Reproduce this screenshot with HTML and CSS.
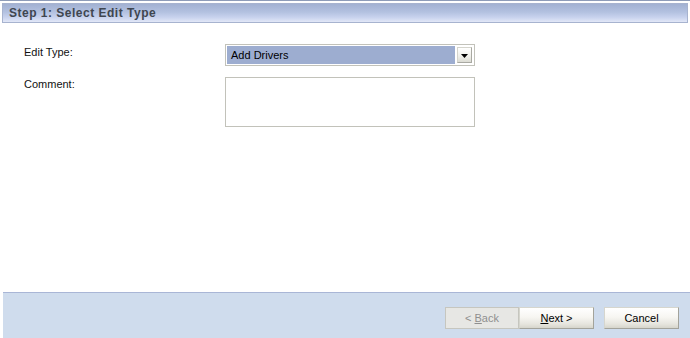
FILE: index.html
```html
<!DOCTYPE html>
<html>
<head>
<meta charset="utf-8">
<link rel="stylesheet" href="styles.css">
</head>
<body>
<div class="page">
  <div class="topline"></div>
  <div class="header"><span class="title">Step 1: Select Edit Type</span></div>
  <div class="form">
    <div class="label label-first">Edit Type:</div>
    <div class="select">
      <div class="select-value">Add Drivers</div>
      <div class="select-btn">
        <svg width="7" height="4" viewBox="0 0 7 4"><path d="M0 0H7L3.5 4Z" fill="#000"/></svg>
      </div>
    </div>
    <div class="label label-second">Comment:</div>
    <div class="textarea"></div>
  </div>
  <div class="footer">
    <div class="btn-pair">
      <button class="btn btn-disabled">&lt; <u>B</u>ack</button>
      <button class="btn"><u>N</u>ext &gt;</button>
    </div>
    <button class="btn">Cancel</button>
  </div>
</div>
</body>
</html>
```
FILE: styles.css
```css
html, body {
  margin: 0;
  padding: 0;
  background: #ffffff;
}
body {
  font-family: "Liberation Sans", Arial, sans-serif;
  font-size: 11px;
  color: #000000;
}
.page {
  width: 690px;
  height: 338px;
  display: flex;
  flex-direction: column;
  overflow: hidden;
}
.topline {
  height: 1px;
  background: #8e9cb8;
  margin-bottom: 2px;
}
.header {
  margin: 0 2px;
  height: 18px;
  border: 1px solid #a7b3cf;
  background: linear-gradient(to bottom, #a2b1d2 0%, #b3c1e0 45%, #c9d3ee 75%, #e2e7f7 100%);
  display: flex;
  align-items: center;
  padding-left: 6px;
}
.title {
  font-weight: bold;
  font-size: 12px;
  color: #3f4650;
  letter-spacing: 0.5px;
}
.form {
  display: grid;
  grid-template-columns: 201px 250px;
  grid-template-rows: 22px 50px;
  row-gap: 11px;
  padding: 21px 0 0 24px;
}
.label {
  line-height: 13px;
  color: #111111;
}
.label-first { padding-top: 2px; }
.label-second { padding-top: 1px; }
.select {
  box-sizing: border-box;
  height: 22px;
  border: 1px solid #c2c2ba;
  padding: 1px 2px 1px 1px;
  display: flex;
  align-items: center;
  gap: 2px;
}
.select-value {
  flex: 1;
  height: 18px;
  background: #9dadd0;
  line-height: 18px;
  padding-left: 4px;
  color: #000000;
}
.select-btn {
  box-sizing: border-box;
  width: 15px;
  height: 16px;
  border: 1px solid #a9a9a2;
  border-top-color: #d4d4cc;
  border-left-color: #d4d4cc;
  background: linear-gradient(to bottom, #ffffff 0%, #efefe9 60%, #dcdcd4 100%);
  display: flex;
  align-items: center;
  justify-content: center;
}
.select-btn svg { display: block; margin-top: 1px; }
.textarea {
  box-sizing: border-box;
  height: 50px;
  border: 1px solid #c2c2ba;
  background: #ffffff;
}
.footer {
  box-sizing: border-box;
  margin-top: auto;
  margin-left: 3px;
  height: 46px;
  border-top: 1px solid #a9b6d6;
  background: #cfdced;
  display: flex;
  justify-content: flex-end;
  align-items: flex-start;
  padding: 14px 11px 0 0;
  gap: 10px;
}
.btn-pair {
  display: flex;
  gap: 0;
}
.btn {
  box-sizing: border-box;
  width: 75px;
  height: 22px;
  margin: 0;
  padding: 0;
  font-family: "Liberation Sans", Arial, sans-serif;
  font-size: 11px;
  color: #000000;
  border: 1px solid #a3a39b;
  border-top-color: #d6d6ce;
  border-left-color: #d6d6ce;
  border-radius: 0;
  background: linear-gradient(to bottom, #ffffff 0%, #f7f6f2 45%, #e6e5de 80%, #d6d5cc 100%);
}
.btn u { text-decoration: underline; }
.btn-disabled {
  width: 74px;
  color: #8f8f8f;
  background: #e7e7e4;
  border: 1px solid #c6c6bf;
}
```
